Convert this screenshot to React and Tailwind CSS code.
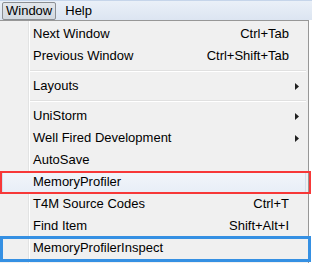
import React from 'react';

const items = [
  { label: 'Next Window', shortcut: 'Ctrl+Tab' },
  { label: 'Previous Window', shortcut: 'Ctrl+Shift+Tab' },
  { sep: true },
  { label: 'Layouts', sub: true },
  { sep: true },
  { label: 'UniStorm', sub: true },
  { label: 'Well Fired Development', sub: true },
  { label: 'AutoSave' },
  { label: 'MemoryProfiler', active: true },
  { label: 'T4M Source Codes', shortcut: 'Ctrl+T' },
  { label: 'Find Item', shortcut: 'Shift+Alt+I' },
  { label: 'MemoryProfilerInspect' },
];

function Arrow() {
  return (
    <svg width="4" height="7" viewBox="0 0 4 7" className="block">
      <path d="M0 0 L4 3.5 L0 7 Z" fill="#202020" />
    </svg>
  );
}

export default function App() {
  return (
    <div
      className="relative w-[312px] h-[263px] overflow-hidden bg-white text-[13px] text-black"
      style={{ fontFamily: '"Liberation Sans", Arial, sans-serif' }}
    >
      {/* menu bar */}
      <div className="h-[20px] flex items-center border-t border-[#c6d5ea] bg-gradient-to-b from-[#eaf0f8] to-[#dce5f1]">
        <div className="ml-[2px] h-[18px] px-[3px] flex items-center rounded-[2px] border border-[#8b8f94] bg-gradient-to-b from-[#e2e6eb] to-[#d3d9e0]">
          Window
        </div>
        <div className="ml-[9px]">Help</div>
      </div>

      {/* dropdown */}
      <div className="relative w-[309px] border-t border-r border-[#979797] bg-[#f0f0f0] pt-[2px] pb-[4px]">
        <div className="absolute left-[28px] top-0 bottom-0 w-[2px] border-l border-[#e2e3e3] bg-white" />
        {items.map((it, i) =>
          it.sep ? (
            <div key={i} className="relative h-[8px] flex items-center pl-[30px] pr-[2px]">
              <div className="w-full h-[2px] border-t border-[#e0e0e0] bg-white" />
            </div>
          ) : it.active ? (
            <div
              key={i}
              className="relative h-[22px] mx-[2px] flex items-center pl-[30px] pr-[17px] rounded-[2px] border border-[#d3dfee] bg-gradient-to-b from-[#f2f5fa] to-[#e8eef7]"
            >
              <span className="flex-1 whitespace-nowrap">{it.label}</span>
            </div>
          ) : (
            <div key={i} className="relative h-[22px] flex items-center pl-[33px] pr-[19px]">
              <span className="flex-1 whitespace-nowrap">{it.label}</span>
              {it.shortcut && <span className="whitespace-nowrap">{it.shortcut}</span>}
              {it.sub && (
                <span className="absolute right-[9px] top-[8px]">
                  <Arrow />
                </span>
              )}
            </div>
          )
        )}
      </div>

      {/* annotation boxes */}
      <div className="absolute left-0 top-[171px] w-[311px] h-[23px] border-[2px] border-[#f73838]" />
      <div className="absolute left-0 top-[236px] w-[311px] h-[26px] border-[3px] border-[#3590e3]" />
    </div>
  );
}
